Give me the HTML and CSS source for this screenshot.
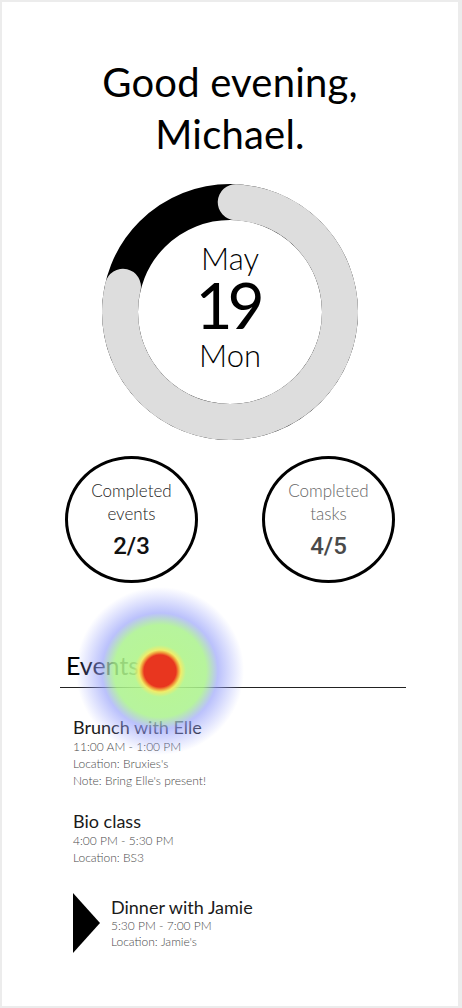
FILE: index.html
```html
<!DOCTYPE html>
<html lang="en">
<head>
<meta charset="utf-8">
<title>Today</title>
<link rel="stylesheet" href="styles.css">
</head>
<body>
<main class="page">
  <h1 class="greeting">Good evening,<br>Michael.</h1>

  <div class="dial">
    <svg class="dial-ring" width="256" height="256" viewBox="0 0 256 256" aria-hidden="true">
      <circle cx="128" cy="128" r="110" fill="none" stroke="#000" stroke-width="36"/>
      <circle cx="128" cy="128" r="110" fill="none" stroke="#dddddd" stroke-width="36"
              stroke-linecap="round" stroke-dasharray="537.6 800"
              transform="rotate(-87 128 128)"/>
    </svg>
    <div class="dial-date">
      <span class="dial-month">May</span>
      <span class="dial-day">19</span>
      <span class="dial-weekday">Mon</span>
    </div>
  </div>

  <div class="stats">
    <div class="stat">
      <span class="stat-label">Completed<br>events</span>
      <span class="stat-value">2/3</span>
    </div>
    <div class="stat stat-muted">
      <span class="stat-label">Completed<br>tasks</span>
      <span class="stat-value">4/5</span>
    </div>
  </div>

  <section class="events">
    <h2 class="events-title">Events</h2>
    <ul class="event-list">
      <li class="event">
        <div class="event-body">
          <span class="event-name">Brunch with Elle</span>
          <span class="event-line">11:00 AM - 1:00 PM</span>
          <span class="event-line">Location: Bruxies's</span>
          <span class="event-line">Note: Bring Elle's present!</span>
        </div>
      </li>
      <li class="event">
        <div class="event-body">
          <span class="event-name">Bio class</span>
          <span class="event-line">4:00 PM - 5:30 PM</span>
          <span class="event-line">Location: BS3</span>
        </div>
      </li>
      <li class="event event-current">
        <span class="event-marker" aria-hidden="true"></span>
        <div class="event-body">
          <span class="event-name">Dinner with Jamie</span>
          <span class="event-line">5:30 PM - 7:00 PM</span>
          <span class="event-line">Location: Jamie's</span>
        </div>
      </li>
    </ul>
  </section>

  <div class="heat" aria-hidden="true"></div>
</main>
</body>
</html>
```

FILE: styles.css
```css
* {
  box-sizing: border-box;
}

html, body {
  margin: 0;
  padding: 0;
}

body {
  background: #ececec;
  padding: 2px 4px 2px 2px;
  font-family: Lato, "Open Sans", sans-serif;
  color: #000;
}

.page {
  position: relative;
  width: 456px;
  height: 1004px;
  background: #fff;
  display: flex;
  flex-direction: column;
  align-items: center;
  padding-top: 54px;
  overflow: hidden;
}

.greeting {
  margin: 0;
  font-size: 40px;
  line-height: 52px;
  font-weight: 400;
  text-align: center;
  letter-spacing: 0.2px;
}

.dial {
  position: relative;
  width: 256px;
  height: 256px;
  margin-top: 24px;
}

.dial-ring {
  display: block;
}

.dial-date {
  position: absolute;
  inset: 0;
  display: flex;
  flex-direction: column;
  align-items: center;
  padding-top: 56.5px;
}

.dial-month,
.dial-weekday {
  font-size: 31px;
  font-weight: 300;
  line-height: 35px;
}

.dial-weekday {
  line-height: 44px;
}

.dial-day {
  font-size: 64px;
  font-weight: 400;
  line-height: 57px;
  letter-spacing: -5px;
  margin-left: -5px;
}

.stats {
  display: flex;
  gap: 64px;
  margin-top: 16px;
}

.stat {
  width: 133px;
  height: 127px;
  border: 3px solid #000;
  border-radius: 50%;
  display: flex;
  flex-direction: column;
  align-items: center;
  padding-top: 20px;
  text-align: center;
}

.stat-label {
  font-size: 17px;
  font-weight: 300;
  line-height: 23px;
  color: #222;
}

.stat-value {
  margin-top: 7px;
  font-family: Roboto, sans-serif;
  font-size: 24px;
  font-weight: 500;
  line-height: 28px;
  color: #111;
}

.stat-muted .stat-label {
  color: #666;
}

.stat-muted .stat-value {
  color: #4a4a4a;
}

.events {
  align-self: flex-start;
  margin-left: 58px;
  margin-top: 67px;
  width: 346px;
}

.events-title {
  margin: 0;
  padding: 0 0 7px 6px;
  font-size: 25px;
  font-weight: 400;
  line-height: 30px;
  border-bottom: 1px solid #222;
  color: #000;
}

.event-list {
  list-style: none;
  margin: 0;
  padding: 28px 0 0 13px;
  display: flex;
  flex-direction: column;
  gap: 21px;
}

.event {
  display: flex;
  align-items: center;
  gap: 11px;
}

.event-body {
  display: flex;
  flex-direction: column;
}

.event-name {
  font-size: 18px;
  line-height: 22px;
  font-weight: 400;
  color: #1a1a1a;
}

.event-line {
  font-size: 12px;
  line-height: 17px;
  font-weight: 300;
  color: #4a4a4a;
}

.event-current {
  margin-top: 6px;
}

.event-current .event-line {
  line-height: 16px;
}

.event-marker {
  width: 0;
  height: 0;
  border-top: 30.5px solid transparent;
  border-bottom: 30.5px solid transparent;
  border-left: 27px solid #000;
}

.heat {
  position: absolute;
  left: 73px;
  top: 584px;
  width: 170px;
  height: 170px;
  border-radius: 50%;
  pointer-events: none;
  background: radial-gradient(circle closest-side,
    #e8361f 0px,
    #e8361f 16px,
    #f09a3a 18.5px,
    #f0ec6a 21px,
    rgba(176, 244, 140, 0.9) 26px,
    rgba(170, 242, 140, 0.85) 46px,
    rgba(150, 160, 250, 0.65) 58px,
    rgba(150, 160, 250, 0.35) 70px,
    rgba(150, 160, 250, 0) 84px);
}
```
